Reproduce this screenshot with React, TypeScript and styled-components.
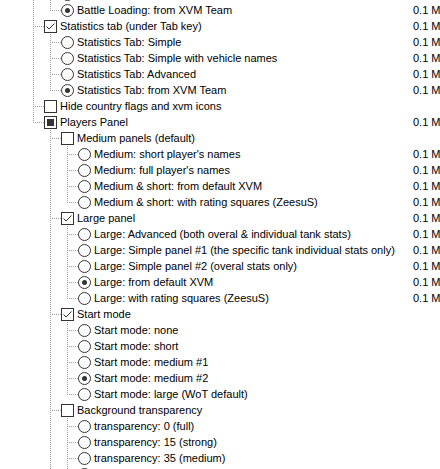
import styled, { createGlobalStyle } from 'styled-components'

type Kind = 'check' | 'radio'
type Mark = 'on' | 'off' | 'mixed'

interface Item {
  depth: number
  kind: Kind
  label: string
  mark?: Mark
  size?: string
}

const MB = '0.1 MB'

// the tree is scrolled: the first entry sits above the visible area
const items: Item[] = [
  { depth: 2, kind: 'radio', label: 'Battle Loading: from default XVM', size: MB },
  { depth: 2, kind: 'radio', label: 'Battle Loading: from XVM Team', mark: 'on', size: MB },
  { depth: 1, kind: 'check', label: 'Statistics tab (under Tab key)', mark: 'on', size: MB },
  { depth: 2, kind: 'radio', label: 'Statistics Tab: Simple', size: MB },
  { depth: 2, kind: 'radio', label: 'Statistics Tab: Simple with vehicle names', size: MB },
  { depth: 2, kind: 'radio', label: 'Statistics Tab: Advanced', size: MB },
  { depth: 2, kind: 'radio', label: 'Statistics Tab: from XVM Team', mark: 'on', size: MB },
  { depth: 1, kind: 'check', label: 'Hide country flags and xvm icons' },
  { depth: 1, kind: 'check', label: 'Players Panel', mark: 'mixed', size: MB },
  { depth: 2, kind: 'check', label: 'Medium panels (default)' },
  { depth: 3, kind: 'radio', label: "Medium: short player's names", size: MB },
  { depth: 3, kind: 'radio', label: "Medium: full player's names", size: MB },
  { depth: 3, kind: 'radio', label: 'Medium & short: from default XVM', size: MB },
  { depth: 3, kind: 'radio', label: 'Medium & short: with rating squares (ZeesuS)', size: MB },
  { depth: 2, kind: 'check', label: 'Large panel', mark: 'on', size: MB },
  { depth: 3, kind: 'radio', label: 'Large: Advanced (both overal & individual tank stats)', size: MB },
  { depth: 3, kind: 'radio', label: 'Large: Simple panel #1 (the specific tank individual stats only)', size: MB },
  { depth: 3, kind: 'radio', label: 'Large: Simple panel #2 (overal stats only)', size: MB },
  { depth: 3, kind: 'radio', label: 'Large: from default XVM', mark: 'on', size: MB },
  { depth: 3, kind: 'radio', label: 'Large: with rating squares (ZeesuS)', size: MB },
  { depth: 2, kind: 'check', label: 'Start mode', mark: 'on' },
  { depth: 3, kind: 'radio', label: 'Start mode: none' },
  { depth: 3, kind: 'radio', label: 'Start mode: short' },
  { depth: 3, kind: 'radio', label: 'Start mode: medium #1' },
  { depth: 3, kind: 'radio', label: 'Start mode: medium #2', mark: 'on' },
  { depth: 3, kind: 'radio', label: 'Start mode: large (WoT default)' },
  { depth: 2, kind: 'check', label: 'Background transparency' },
  { depth: 3, kind: 'radio', label: 'transparency: 0 (full)' },
  { depth: 3, kind: 'radio', label: 'transparency: 15 (strong)' },
  { depth: 3, kind: 'radio', label: 'transparency: 35 (medium)' },
  { depth: 3, kind: 'radio', label: 'transparency: 50 (light)' },
  { depth: 3, kind: 'radio', label: 'transparency: 75 (weak)' },
  { depth: 2, kind: 'check', label: 'Clan icons' },
]

type Guide = 'pipe' | 'tee' | 'elbow' | 'blank'

// does the branch at `depth` carry on below row i?
function continues(i: number, depth: number) {
  for (let j = i + 1; j < items.length; j++) {
    if (items[j].depth < depth) return false
    if (items[j].depth === depth) return true
  }
  return false
}

function guidesFor(i: number): Guide[] {
  const d = items[i].depth
  const out: Guide[] = []
  for (let k = 0; k < d; k++) {
    if (k === d - 1) out.push(continues(i, d) ? 'tee' : 'elbow')
    else out.push(continues(i, k + 1) ? 'pipe' : 'blank')
  }
  return out
}

const GlobalStyle = createGlobalStyle`
  html, body {
    margin: 0;
    background: #fff;
    overflow: hidden;
  }
`

const Viewport = styled.div`
  width: 440px;
  height: 469px;
  overflow: hidden;
  background: #fff;
  font-family: Tahoma, 'Liberation Sans', Arial, sans-serif;
  font-size: 11px;
  color: #000;
`

const Tree = styled.ul`
  list-style: none;
  margin: -14px 0 0;
  padding: 0 0 0 27px;
  width: 473px;
  box-sizing: border-box;
`

const Row = styled.li`
  display: flex;
  align-items: center;
  height: 16px;
  white-space: nowrap;
`

const dots = (dir: string) =>
  `repeating-linear-gradient(${dir}, #a0a0a0 0 1px, transparent 1px 2px)`

const Branch = styled.span<{ $kind: Guide }>`
  flex: none;
  width: 17px;
  height: 16px;
  background-repeat: no-repeat;
  ${({ $kind }) => {
    if ($kind === 'blank') return ''
    const vert = `${dots('to bottom')} 6px 0 / 1px ${$kind === 'elbow' ? '9px' : '16px'}`
    if ($kind === 'pipe') return `background: ${vert} no-repeat;`
    return `background: ${vert} no-repeat, ${dots('to right')} 6px 8px / 11px 1px no-repeat;`
  }}
`

const Box = styled.span<{ $mark: Mark }>`
  flex: none;
  position: relative;
  width: 13px;
  height: 13px;
  box-sizing: border-box;
  border: 1px solid #333;
  background: #fff;
  display: flex;
  align-items: center;
  justify-content: center;

  ${({ $mark }) =>
    $mark === 'mixed' &&
    `&::after {
      content: '';
      width: 7px;
      height: 7px;
      background: #333;
    }`}
`

const Radio = styled.span<{ $on: boolean }>`
  flex: none;
  width: 13px;
  height: 13px;
  box-sizing: border-box;
  border: 1px solid #333;
  border-radius: 50%;
  background: #fff;
  display: flex;
  align-items: center;
  justify-content: center;

  &::after {
    content: '';
    width: 5px;
    height: 5px;
    border-radius: 50%;
    background: ${({ $on }) => ($on ? '#333' : 'transparent')};
  }
`

const Label = styled.span`
  flex: 1;
  margin-left: 3px;
  line-height: 16px;
`

const Size = styled.span`
  flex: none;
  width: 60px;
  line-height: 16px;
`

function Tick() {
  return (
    <svg width="11" height="11" viewBox="0 0 11 11">
      <path d="M1.5 5.5 L4 8 L9.5 2.5" fill="none" stroke="#333" strokeWidth="1" />
    </svg>
  )
}

function Control({ item }: { item: Item }) {
  if (item.kind === 'radio') return <Radio $on={item.mark === 'on'} />
  const mark = item.mark ?? 'off'
  return <Box $mark={mark}>{mark === 'on' && <Tick />}</Box>
}

export default function App() {
  return (
    <Viewport>
      <GlobalStyle />
      <Tree>
        {items.map((item, i) => (
          <Row key={i}>
            {guidesFor(i).map((g, k) => (
              <Branch key={k} $kind={g} />
            ))}
            <Control item={item} />
            <Label>{item.label}</Label>
            <Size>{item.size ?? ''}</Size>
          </Row>
        ))}
      </Tree>
    </Viewport>
  )
}
